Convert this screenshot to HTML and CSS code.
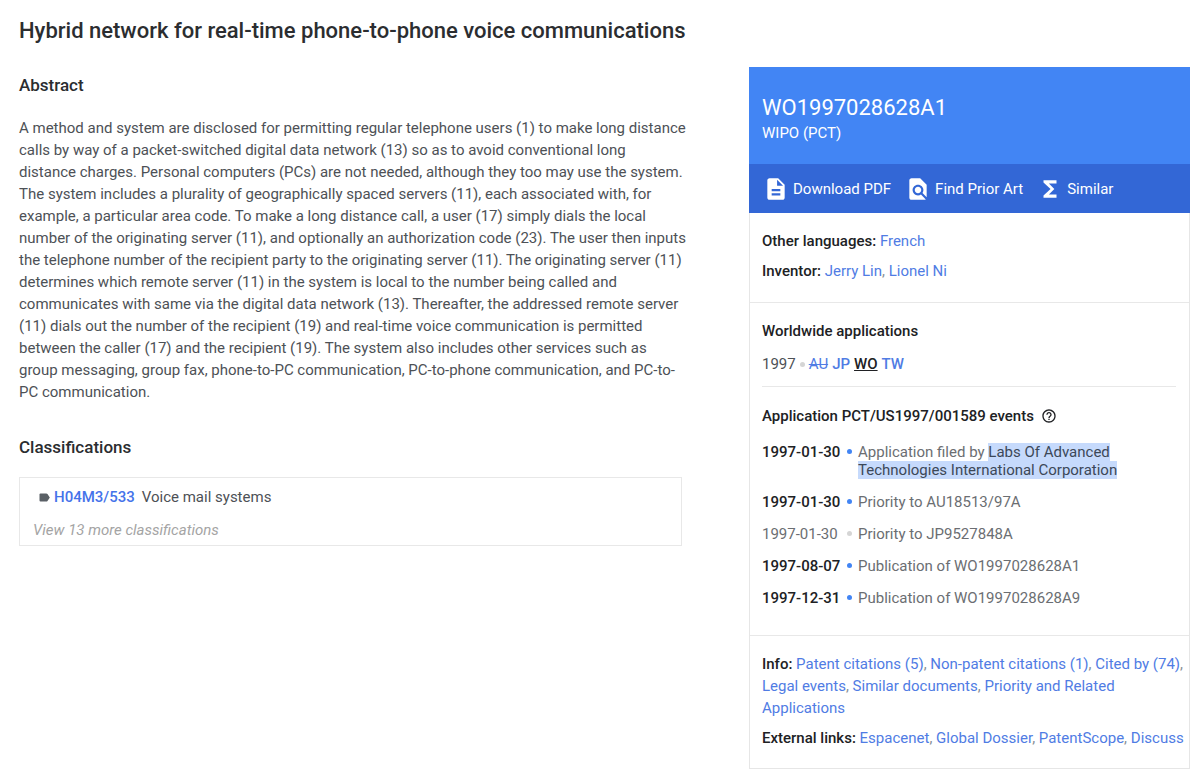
FILE: index.html
```html
<!DOCTYPE html>
<html lang="en">
<head>
    <meta charset="UTF-8">
    <meta name="viewport" content="width=device-width, initial-scale=1.0">
    <title>WO1997028628A1 - Hybrid network for real-time phone-to-phone voice communications</title>
    <link rel="stylesheet" href="styles.css">
</head>
<body>
    <h1>Hybrid network for real-time phone-to-phone voice communications</h1>
    <div class="columns">
        <main>
            <section>
                <h2>Abstract</h2>
                <p class="abstract">
                    A method and system are disclosed for permitting regular telephone users (1) to make long distance<br>
                    calls by way of a packet-switched digital data network (13) so as to avoid conventional long<br>
                    distance charges. Personal computers (PCs) are not needed, although they too may use the system.<br>
                    The system includes a plurality of geographically spaced servers (11), each associated with, for<br>
                    example, a particular area code. To make a long distance call, a user (17) simply dials the local<br>
                    number of the originating server (11), and optionally an authorization code (23). The user then inputs<br>
                    the telephone number of the recipient party to the originating server (11). The originating server (11)<br>
                    determines which remote server (11) in the system is local to the number being called and<br>
                    communicates with same via the digital data network (13). Thereafter, the addressed remote server<br>
                    (11) dials out the number of the recipient (19) and real-time voice communication is permitted<br>
                    between the caller (17) and the recipient (19). The system also includes other services such as<br>
                    group messaging, group fax, phone-to-PC communication, PC-to-phone communication, and PC-to-<br>
                    PC communication.
                </p>
            </section>
            <section>
                <h2>Classifications</h2>
                <div class="classifications">
                    <div class="class-row">
                        <svg class="label-icon" viewBox="0 0 11 9"><path d="M1.5 0.5H7.3Q8 .5 8.5 1.1L10.8 4.5 8.5 7.9Q8 8.500 7.300 8.500H1.500Q.5 8.500.5 7.500V1.500Q.5.5 1.500.5Z"/></svg>
                        <a href="#" class="code">H04M3/533</a>
                        <span>Voice mail systems</span>
                    </div>
                    <button type="button" class="more">View 13 more classifications</button>
                </div>
            </section>
        </main>

        <aside class="card">
            <header>
                <h2 class="pub-number">WO1997028628A1</h2>
                <p class="office">WIPO (PCT)</p>
            </header>
            <nav class="actions">
                <a href="#">
                    <svg viewBox="0 0 24 24"><path d="M14 2H6c-1.100 0-2 .9-2 2v16c0 1.100.9 2 2 2h12c1.100 0 2-.9 2-2V8l-6-6zm2 16H8v-2h8v2zm0-4H8v-2h8v2zm-3-5V3.500L18.500 9H13z"/></svg>
                    Download PDF
                </a>
                <a href="#">
                    <svg viewBox="0 0 24 24"><path d="M20 19.590V8l-6-6H6c-1.100 0-2 .9-2 2v16c0 1.100.9 2 2 2h12c.45 0 .85-.15 1.190-.4l-4.430-4.430c-.8.520-1.740.830-2.760.830-2.760 0-5-2.240-5-5s2.240-5 5-5 5 2.240 5 5c0 1.020-.31 1.960-.83 2.750L20 19.590zM9 13c0 1.660 1.340 3 3 3s3-1.340 3-3-1.340-3-3-3-3 1.340-3 3z"/></svg>
                    Find Prior Art
                </a>
                <a href="#">
                    <svg viewBox="0 0 24 24"><path d="M18 4H6v2l6.500 6L6 18v2h12v-3h-7l5-5-5-5h7z"/></svg>
                    Similar
                </a>
            </nav>

            <section class="people">
                <p><b>Other languages:</b> <a href="#">French</a></p>
                <p><b>Inventor:</b> <a href="#">Jerry Lin</a>, <a href="#">Lionel Ni</a></p>
            </section>

            <section class="timeline">
                <h3>Worldwide applications</h3>
                <div class="countries">
                    <span class="year">1997</span>
                    <i class="dot"></i>
                    <a href="#" class="dead">AU</a>
                    <a href="#">JP</a>
                    <a href="#" class="current">WO</a>
                    <a href="#">TW</a>
                </div>
                <h3 class="events-title">Application PCT/US1997/001589 events
                    <svg viewBox="0 0 24 24"><path d="M11 18h2v-2h-2v2zm1-16C6.480 2 2 6.480 2 12s4.480 10 10 10 10-4.480 10-10S17.520 2 12 2zm0 18c-4.410 0-8-3.590-8-8s3.590-8 8-8 8 3.590 8 8-3.590 8-8 8zm0-14c-2.210 0-4 1.790-4 4h2c0-1.100.9-2 2-2s2 .9 2 2c0 2-3 1.750-3 5h2c0-2.250 3-2.500 3-5 0-2.210-1.790-4-4-4z"/></svg>
                </h3>
                <ul class="events">
                    <li class="key"><time>1997-01-30</time><i class="dot"></i><span>Application filed by <mark>Labs Of Advanced Technologies International Corporation</mark></span></li>
                    <li class="key"><time>1997-01-30</time><i class="dot"></i><span>Priority to AU18513/97A</span></li>
                    <li><time>1997-01-30</time><i class="dot"></i><span>Priority to JP9527848A</span></li>
                    <li class="key"><time>1997-08-07</time><i class="dot"></i><span>Publication of WO1997028628A1</span></li>
                    <li class="key"><time>1997-12-31</time><i class="dot"></i><span>Publication of WO1997028628A9</span></li>
                </ul>
            </section>

            <section class="links">
                <p><b>Info:</b> <a href="#">Patent citations (5)</a>, <a href="#">Non-patent citations (1)</a>, <a href="#">Cited by (74)</a>, <a href="#">Legal events</a>, <a href="#">Similar documents</a>, <a href="#">Priority and Related Applications</a></p>
                <p><b>External links:</b> <a href="#">Espacenet</a>, <a href="#">Global Dossier</a>, <a href="#">PatentScope</a>, <a href="#">Discuss</a></p>
            </section>
        </aside>
    </div>
</body>
</html>
```
FILE: styles.css
```css
* {
    box-sizing: border-box;
}
body {
    margin: 0;
    padding: 16px 10px 10px 19px;
    font-family: Roboto, sans-serif;
    font-size: 15px;
    line-height: 22px;
    color: #4d5156;
    background: #fff;
}
h1, h2, h3, p, ul {
    margin: 0;
    padding: 0;
}
a {
    color: #507ce4;
    text-decoration: none;
}
h1 {
    font-size: 22px;
    line-height: 30px;
    font-weight: 500;
    color: #2b2d30;
}
h2 {
    font-size: 17px;
    line-height: 24px;
    font-weight: 500;
    color: #2b2d30;
}
h3, b {
    font-size: 15px;
    font-weight: 500;
    color: #202124;
}
.columns {
    display: grid;
    grid-template-columns: minmax(0, 683fr) minmax(0, 441fr);
    align-items: start;
    gap: 47px;
    margin-top: 21px;
}
main {
    display: grid;
    gap: 32px;
    padding-top: 6px;
}
.abstract {
    margin-top: 20px;
}
.classifications {
    margin: 18px 20px 0 0;
    padding: 8px 13px 4px;
    border: 1px solid #e8e8e8;
}
.class-row {
    display: flex;
    align-items: center;
    padding-left: 6px;
}
.label-icon {
    width: 11px;
    height: 9px;
    margin-right: 4px;
    fill: #5a6066;
}
.code {
    margin-right: 7px;
    font-weight: 500;
    color: #4573ea;
}
.more {
    display: block;
    margin-top: 11px;
    padding: 0;
    border: 0;
    background: none;
    font: italic 15px/22px Roboto, sans-serif;
    color: #a4a4a4;
}
.card {
    border: 1px solid #e6e6e6;
    border-top: 0;
}
.card header {
    margin: 0 -1px;
    padding: 26px 13px 20px;
    background: #4285f4;
    color: #fff;
}
.pub-number {
    font-size: 22px;
    line-height: 29px;
    font-weight: 400;
    color: #fff;
}
.office {
    color: #fff;
}
.actions {
    display: flex;
    align-items: center;
    gap: 14px;
    height: 49px;
    margin: 0 -1px;
    padding: 0 14px;
    background: #3367d6;
}
.actions a {
    display: flex;
    align-items: center;
    gap: 4px;
    color: #fff;
}
.actions svg {
    width: 26px;
    height: 26px;
    fill: #fff;
}
.card section {
    padding: 17px 13px 19px 12px;
    border-top: 1px solid #e8e8e8;
}
.card .people {
    padding-bottom: 20px;
    border-top: 0;
}
.card .timeline {
    padding-bottom: 28px;
}
/* the link lists run a little wider than the rest */
.card .links {
    padding-right: 3px;
}
.card p + p {
    margin-top: 8px;
}
.people p, .links p {
    color: #8a8f96;
}
.countries {
    display: flex;
    align-items: center;
    gap: 4px;
    margin-top: 11px;
    padding-bottom: 11px;
    border-bottom: 1px solid #e8e8e8;
}
.countries a {
    font-weight: 500;
}
.countries .dead {
    font-weight: 400;
    text-decoration: line-through;
}
.countries .current {
    color: #202124;
    text-decoration: underline;
}
.dot {
    flex: none;
    width: 5px;
    height: 5px;
    border-radius: 50%;
    background: #d5d5d5;
}
.events-title {
    display: flex;
    align-items: center;
    gap: 7px;
    margin-top: 18px;
}
.events-title svg {
    width: 16px;
    height: 16px;
    fill: #202124;
}
.events {
    display: grid;
    gap: 14px;
    margin-top: 16px;
    list-style: none;
    line-height: 18px;
    color: #6b6e72;
}
.events li {
    display: grid;
    grid-template-columns: 85px 11px 1fr;
}
.events time {
    white-space: nowrap;
}
.events .dot {
    margin-top: 6px;
}
.events .key time {
    font-weight: 500;
    color: #202124;
}
.events .key .dot {
    background: #4285f4;
}
mark {
    background: #c6dafc;
    color: #3c4858;
}
```
